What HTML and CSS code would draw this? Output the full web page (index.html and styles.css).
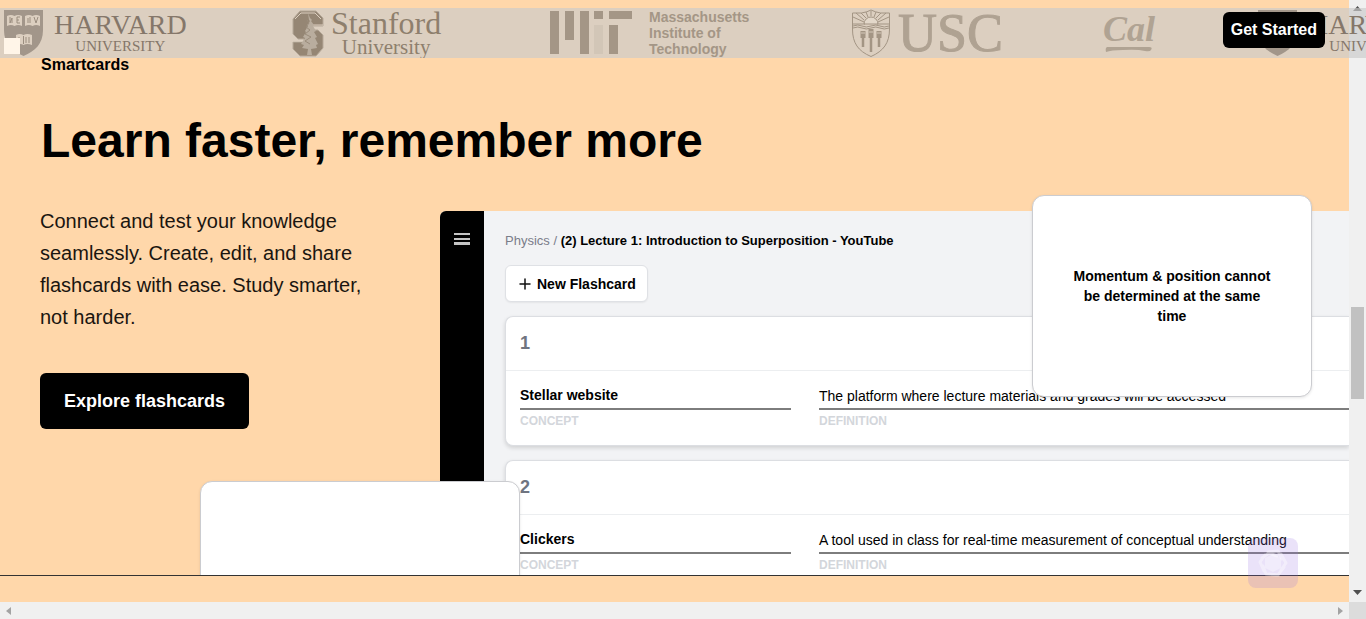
FILE: index.html
```html
<!DOCTYPE html>
<html lang="en">
<head>
<meta charset="utf-8">
<meta name="viewport" content="width=device-width, initial-scale=1">
<title>Smartcards</title>
<link rel="stylesheet" href="styles.css">
</head>
<body>
<div class="window">
  <div class="page">
    <main class="smartcards">
      <p class="eyebrow">Smartcards</p>
      <h1 class="title">Learn faster, remember more</h1>
      <div class="columns">
        <div class="intro">
          <p class="lead">Connect and test your knowledge seamlessly. Create, edit, and share flashcards with ease. Study smarter, not harder.</p>
          <button class="explore" type="button">Explore flashcards</button>
        </div>
        <div class="app">
          <div class="rail">
            <button class="menu" type="button" aria-label="Menu">
              <svg width="16" height="12" viewBox="0 0 16 12"><path d="M0 0h16v2H0zM0 5h16v2H0zM0 9h16v3H0z" fill="#c4c4c4"/></svg>
            </button>
          </div>
          <div class="deck">
            <p class="crumbs"><a href="#physics">Physics</a> / <strong>(2) Lecture 1: Introduction to Superposition - YouTube</strong></p>
            <button class="new-card" type="button">
              <svg width="12" height="12" viewBox="0 0 12 12"><path d="M1 6h10M6 1v10" stroke="#111" stroke-width="1.5" stroke-linecap="round"/></svg>
              New Flashcard
            </button>
            <article class="card">
              <h2 class="number">1</h2>
              <div class="fields">
                <div class="field"><p class="value concept">Stellar website</p><p class="label">CONCEPT</p></div>
                <div class="field"><p class="value">The platform where lecture materials and grades will be accessed</p><p class="label">DEFINITION</p></div>
              </div>
            </article>
            <article class="card">
              <h2 class="number">2</h2>
              <div class="fields">
                <div class="field"><p class="value concept">Clickers</p><p class="label">CONCEPT</p></div>
                <div class="field"><p class="value">A tool used in class for real-time measurement of conceptual understanding</p><p class="label">DEFINITION</p></div>
              </div>
            </article>
          </div>
        </div>
      </div>
      <div class="floating answer"><p>Momentum &amp; position cannot be determined at the same time</p></div>
      <div class="floating blank"></div>
    </main>
    <div class="next-section"></div>
  </div>
  <div class="scroll-y">
    <svg width="9" height="6" viewBox="0 0 9 6"><path d="M0 5L4.500 0L9 5z" fill="#505050"/></svg>
    <span class="thumb"></span>
    <svg width="9" height="6" viewBox="0 0 9 6"><path d="M0 0L4.500 5L9 0z" fill="#505050"/></svg>
  </div>
  <div class="scroll-x">
    <svg width="5" height="8" viewBox="0 0 5 8"><path d="M5 0L0 4L5 8z" fill="#a3a3a3"/></svg>
    <svg width="5" height="8" viewBox="0 0 5 8"><path d="M0 0L5 4L0 8z" fill="#a3a3a3"/></svg>
  </div>
  <div class="corner"></div>
</div>

<svg width="0" height="0" class="defs" aria-hidden="true">
  <symbol id="shield" viewBox="0 0 39 46">
    <path d="M0 0h39v20c0 14-8 21-19.500 26C8 41 0 34 0 20z" fill="#a2968a"/>
    <g fill="#dccfc0">
      <path d="M3 6q4-2 7.500 0Q14 4 18 6v10q-4-2-7.500 0Q7 14 3 16z"/>
      <path d="M21 6q4-2 7.500 0Q32 4 36 6v10q-4-2-7.500 0Q25 14 21 16z"/>
      <path d="M12 25q4-2 7.500 0Q23 23 28 25v10q-5-2-8.500 0Q16 33 12 35z"/>
    </g>
    <path d="M6 7v6l2-5v5M13 7h3M13 10h2M13 13h3M13 7v6M24 8v5M26 7v6M30 7l2 6 2-6M19.500 26v8M22 27v6M25 27v6M15 27v6" fill="none" stroke="#9a8d7f"/>
  </symbol>
</svg>

<header class="logos">
  <div class="logo harvard">
    <svg width="39" height="46"><use href="#shield"/></svg>
    <div class="words"><span class="big">HARVARD</span><span class="small">UNIVERSITY</span></div>
  </div>
  <div class="logo stanford">
    <svg width="32" height="47" viewBox="0 0 32 47">
      <path d="M8 1h16l7 7v8H20v4h6l5 5v13l-7 8H8l-7-7v-7h11v-3H6l-5-5V9z" fill="#958674" stroke="#b6a999"/>
      <path d="M1 31h11M20 15h11M3 9l6-6h14l6 6" fill="none" stroke="#dccfc0"/>
      <path d="M16 3l2 5 2 2-1 1 3 4-1 1 3 5-2 1 3 5-2 1 3 6-2 1 1 3-6 1 1 6h-5l1-6-6-1 2-3-3-1 4-6-2-1 3-5-1-1 3-5-1-1 3-4-1-1z" fill="#b9ad9e"/>
      <path d="M15 10l2 3-3 4 4 3-5 4 6 3-6 4 5 3" fill="none" stroke="#9a8c7b"/>
    </svg>
    <div class="words"><span class="big">Stanford</span><span class="small">University</span></div>
  </div>
  <div class="logo mit">
    <svg width="83" height="44" viewBox="0 0 83 44">
      <path d="M0 0h9v43H0zM15 0h9v29h-9zM30 0h9v43h-9zM44 0h9v8h-9zM59 0h23v8H59zM59 14h9v29h-9z" fill="#a49686"/>
      <path d="M44 14h9v29h-9z" fill="#d2c6b7"/>
    </svg>
    <div class="words">Massachusetts<br>Institute of<br>Technology</div>
  </div>
  <div class="logo usc">
    <svg width="38" height="48" viewBox="0 0 38 48" fill="none" stroke="#a39584">
      <path d="M0.500 4h9q6-1 9.500-3 4 2 9.500 3h9v16c0 14-6 22-18.500 27.500C6 42 .5 34 .5 20z"/>
      <path d="M12 15a7 7 0 0 1 14 0z" fill="#e3d8ca"/>
      <path d="M12 13L1 8M12 11L4 4M14 9L9 4M16 8L14 3M19 7V2M22 8l2-5M24 9l5-5M26 11l8-7M26 13l11-5M1 15h12M25 15h12M1 17q5-2 9 0t9 0 9 0 9 0M1 19q5-2 9 0t9 0 9 0 9 0"/>
      <path d="M11 22v7M19 20v9M27 22v7" stroke-width="5"/>
      <path d="M11 28v10M19 28v15M27 28v10" stroke-width="2.500"/>
      <path d="M9 24h4M17 23h4M25 24h4" stroke="#d5c8b9"/>
    </svg>
    <span class="usc-name">USC</span>
  </div>
  <div class="logo cal">
    <span class="cal-name">Cal</span>
    <svg width="48" height="8" viewBox="0 0 48 8"><path d="M2 2h42q4 0 2 3-1 2-6 1-8-2-22-1Q6 5 1 7q-1-4 1-5z" fill="#b0a393"/></svg>
  </div>
  <div class="logo harvard">
    <svg width="39" height="46"><use href="#shield"/></svg>
    <div class="words"><span class="big">HARVARD</span><span class="small">UNIVERSITY</span></div>
  </div>
</header>
<span class="marker"></span>
<button class="get-started" type="button">Get Started</button>
<button class="assistant" type="button" aria-label="Assistant">
  <svg width="34" height="34" viewBox="0 0 34 34" fill="none" stroke="#fff" stroke-linecap="round" stroke-linejoin="round">
    <path d="M17 8l8 4v10l-8 4-8-4V12z" fill="#fff" stroke="none" opacity=".35"/>
    <path d="M12 6l10-1 4 8M25 8l5 9-5 7M28 21l-6 8-9-1M20 29l-10-1-3-8M8 25L4 16l5-7M6 12l7-5 8 3" stroke-width="3" opacity=".4"/>
  </svg>
</button>
</body>
</html>
```

FILE: styles.css
```css
* { box-sizing: border-box; }

body, p, h1, h2 { margin: 0; }

body {
  position: relative;
  height: 100vh;
  overflow: hidden;
  font-family: "Liberation Sans", Arial, sans-serif;
  color: #000;
}

button {
  border: 0;
  padding: 0;
  font: inherit;
  cursor: pointer;
}

svg { display: block; flex: none; }
.defs { position: absolute; }

.window {
  display: grid;
  grid-template: minmax(0, 1fr) 17px / minmax(0, 1fr) 17px;
  height: 100%;
}

.page {
  display: flex;
  flex-direction: column;
  overflow: hidden;
  background: #ffd7aa;
}

.smartcards {
  position: relative;
  flex: 1;
  min-height: 0;
  overflow: hidden;
  padding: 53px 0 0 40px;
  border-bottom: 1px solid #333;
}

.next-section { height: 26px; }

.eyebrow {
  padding-left: 1px;
  font-size: 16px;
  font-weight: 700;
  line-height: 24px;
}

.title {
  padding: 40px 0 40px 1px;
  font-size: 48px;
  line-height: 48px;
}

.columns {
  display: grid;
  grid-template-columns: 400px minmax(0, 1fr);
}

.lead {
  max-width: 336px;
  color: #1a1510;
  font-size: 20px;
  line-height: 32px;
}

.explore {
  margin-top: 40px;
  padding: 0 24px;
  height: 56px;
  border-radius: 6px;
  background: #000;
  color: #fff;
  font-size: 18px;
  font-weight: 700;
}

.app {
  display: grid;
  grid-template-columns: 44px minmax(0, 1fr);
  margin-top: 6px;
  border-top-left-radius: 6px;
  overflow: hidden;
  background: #f2f3f5;
}

.rail { background: #000; }

.menu {
  display: block;
  margin: 22px 14px;
  background: none;
}

.deck { padding: 20px 0 0 21px; }

.crumbs {
  color: #7a7d8a;
  font-size: 13px;
  line-height: 20px;
  white-space: nowrap;
}
.crumbs a { color: inherit; text-decoration: none; }
.crumbs strong { color: #000; }

.new-card {
  display: flex;
  align-items: center;
  gap: 6px;
  height: 37px;
  margin: 14px 0;
  padding: 0 11px 0 13px;
  border: 1px solid #dfe1e5;
  border-radius: 6px;
  background: #fff;
  box-shadow: 0 1px 2px rgba(0, 0, 0, .06);
  color: #000;
  font-size: 14px;
  font-weight: 700;
}

.card {
  margin-bottom: 14px;
  border: 1px solid #dcdee2;
  border-right: 0;
  border-radius: 8px 0 0 8px;
  background: #fff;
  box-shadow: 0 2px 4px rgba(0, 0, 0, .14);
}

.number {
  padding-left: 14px;
  border-bottom: 1px solid #eceef0;
  color: #6f7480;
  font-size: 18px;
  line-height: 53px;
}

.fields {
  display: grid;
  grid-template-columns: 271px minmax(0, 1fr);
  gap: 28px;
  padding: 13px 0 13px 14px;
}

.value {
  border-bottom: 2px solid #7d7d7d;
  font-size: 14px;
  line-height: 24px;
  white-space: nowrap;
}

.concept {
  padding-bottom: 2px;
  font-weight: 700;
  line-height: 22px;
}

.label {
  color: #d3d6db;
  font-size: 12px;
  font-weight: 700;
  line-height: 22px;
}

.floating {
  position: absolute;
  border: 1px solid #cbccd0;
  border-radius: 12px;
  background: #fff;
  box-shadow: 0 1px 3px rgba(0, 0, 0, .1);
}

.answer {
  top: 195px;
  right: 37px;
  display: flex;
  align-items: center;
  width: 280px;
  height: 202px;
  padding: 0 36px;
  font-size: 14px;
  font-weight: 700;
  line-height: 20px;
  text-align: center;
}

.blank {
  top: 481px;
  left: 200px;
  width: 320px;
  height: 202px;
}

.scroll-y {
  display: flex;
  flex-direction: column;
  align-items: center;
  justify-content: space-between;
  padding: 6px 0;
  background: #f0f0f0;
}

.thumb {
  width: 13px;
  height: 92px;
  margin-top: 104px;
  background: #c1c1c1;
}

.scroll-x {
  display: flex;
  align-items: center;
  justify-content: space-between;
  padding: 0 6px;
  background: #f0f0f0;
}

.corner { background: #dcdcdc; }

.logos {
  position: absolute;
  top: 8px;
  left: 0;
  right: 0;
  display: flex;
  align-items: center;
  gap: 104px;
  height: 50px;
  padding-left: 4px;
  overflow: hidden;
  background: rgba(203, 203, 203, .67);
  font-family: "Liberation Serif", "Times New Roman", serif;
}

.logo {
  display: flex;
  flex: none;
  align-items: center;
}

.words {
  display: flex;
  flex-direction: column;
  align-items: center;
}

.harvard { width: 184px; gap: 11px; color: #85776a; }
.harvard .big { font-size: 28px; line-height: 26px; }
.harvard .small { font-size: 15px; line-height: 16px; }

.stanford { width: 154px; gap: 7px; color: #8e7f6d; }
.stanford .big { font-size: 32px; line-height: 28px; }
.stanford .small { font-size: 21px; line-height: 20px; }

.mit { width: 198px; gap: 16px; color: #a49686; }
.mit .words {
  display: block;
  font: 700 14px/16px "Liberation Sans", Arial, sans-serif;
}

.usc { width: 148px; gap: 8px; color: #afa292; }
.usc-name {
  font-size: 54px;
  line-height: 48px;
  -webkit-text-stroke: 1px #afa292;
}

.cal { flex-direction: column; width: 50px; color: #b0a393; }
.cal-name {
  font-size: 36px;
  font-style: italic;
  font-weight: 700;
  line-height: 32px;
}

.marker {
  position: absolute;
  top: 38px;
  left: 4px;
  width: 16px;
  height: 16px;
  background: #fff5e8;
}

.get-started {
  position: absolute;
  top: 12px;
  right: 41px;
  height: 36px;
  padding: 0 8px;
  border-radius: 6px;
  background: #000;
  color: #fff;
  font-size: 16px;
  font-weight: 700;
}

.assistant {
  position: absolute;
  right: 68px;
  bottom: 31px;
  display: grid;
  place-items: center;
  width: 50px;
  height: 50px;
  border-radius: 8px;
  background: rgba(150, 110, 225, .2);
}
```
